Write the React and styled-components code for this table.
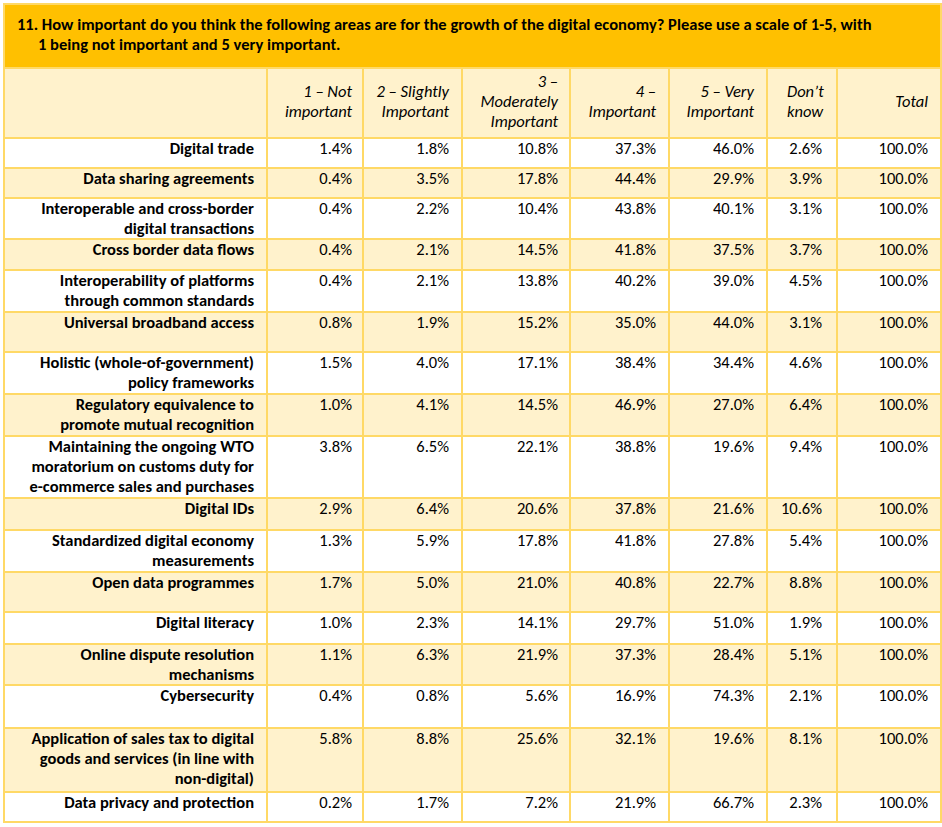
import React from "react";
import styled, { createGlobalStyle } from "styled-components";

const GlobalStyle = createGlobalStyle`
  html, body { margin: 0; padding: 0; background: #ffffff; }
  body { font-family: "Carlito", "Calibri", "Lato", sans-serif; color: #000; }
`;

const COLS = [
  { w: 94, pad: 10 },
  { w: 97, pad: 12 },
  { w: 106, pad: 11 },
  { w: 97, pad: 12 },
  { w: 96, pad: 12 },
  { w: 68, pad: 14 },
  { w: 102, pad: 12 },
];
const TEMPLATE = `261px ${COLS.map((c) => c.w + "px").join(" ")}`;

const LINE = "#FFD966";
const LIGHT = "#FFF2CC";
const BAND = "#FFC000";

const Table = styled.div`
  display: flex;
  flex-direction: column;
  gap: 2px;
  width: max-content;
  margin: 3px 0 0 3px;
  border: 2px solid ${LINE};
  background: ${LINE};
  font-size: 16.5px;
  line-height: 20px;
`;

const Band = styled.div`
  height: 62px;
  box-sizing: border-box;
  background: ${BAND};
  padding: 9px 0 0 12px;
  font-weight: 700;
  white-space: nowrap;
`;

const TitleLine = styled.div`
  padding-left: ${(p) => (p.$indent ? "21px" : "0")};
`;

const Row = styled.div`
  display: grid;
  grid-template-columns: ${TEMPLATE};
  gap: 2px;
  height: ${(p) => p.$h}px;
`;

const Cell = styled.div`
  background: ${(p) => (p.$shade ? LIGHT : "#ffffff")};
  box-sizing: border-box;
  text-align: right;
  white-space: nowrap;
  overflow: hidden;
`;

const HeadCell = styled(Cell)`
  display: flex;
  flex-direction: column;
  justify-content: center;
  align-items: ${(p) => (p.$left ? "flex-start" : "flex-end")};
  font-style: italic;
  padding: 0 ${(p) => p.$pad}px 4px ${(p) => (p.$left ? 19 : 0)}px;
  text-align: ${(p) => (p.$left ? "left" : "right")};
`;

const LabelCell = styled(Cell)`
  font-weight: 700;
  padding: 0 12px 0 0;
`;

const NumCell = styled(Cell)`
  padding: 0 ${(p) => p.$pad}px 0 0;
`;

const TextBlock = styled.div`
  margin-top: ${(p) => (p.$lift ? "-1px" : "0")};
`;

const HEADERS = [
  ["1 \u2013 Not", "important"],
  ["2 \u2013 Slightly", "Important"],
  ["3 \u2013", "Moderately", "Important"],
  ["4 \u2013", "Important"],
  ["5 \u2013 Very", "Important"],
  ["Don\u2019t", "know"],
  ["Total"],
];

const ROWS = [
  { label: ["Digital trade"], h: 28, v: ["1.4%", "1.8%", "10.8%", "37.3%", "46.0%", "2.6%"] },
  { label: ["Data sharing agreements"], h: 28, v: ["0.4%", "3.5%", "17.8%", "44.4%", "29.9%", "3.9%"] },
  { label: ["Interoperable and cross-border", "digital transactions"], h: 39, v: ["0.4%", "2.2%", "10.4%", "43.8%", "40.1%", "3.1%"] },
  { label: ["Cross border data flows"], h: 29, v: ["0.4%", "2.1%", "14.5%", "41.8%", "37.5%", "3.7%"] },
  { label: ["Interoperability of platforms", "through common standards"], h: 40, v: ["0.4%", "2.1%", "13.8%", "40.2%", "39.0%", "4.5%"] },
  { label: ["Universal broadband access"], h: 38, v: ["0.8%", "1.9%", "15.2%", "35.0%", "44.0%", "3.1%"] },
  { label: ["Holistic (whole-of-government)", "policy frameworks"], h: 40, v: ["1.5%", "4.0%", "17.1%", "38.4%", "34.4%", "4.6%"] },
  { label: ["Regulatory equivalence to", "promote mutual recognition"], h: 40, v: ["1.0%", "4.1%", "14.5%", "46.9%", "27.0%", "6.4%"] },
  { label: ["Maintaining the ongoing WTO", "moratorium on customs duty for", "e-commerce sales and purchases"], h: 60, v: ["3.8%", "6.5%", "22.1%", "38.8%", "19.6%", "9.4%"] },
  { label: ["Digital IDs"], h: 30, v: ["2.9%", "6.4%", "20.6%", "37.8%", "21.6%", "10.6%"] },
  { label: ["Standardized digital economy", "measurements"], h: 40, v: ["1.3%", "5.9%", "17.8%", "41.8%", "27.8%", "5.4%"] },
  { label: ["Open data programmes"], h: 38, v: ["1.7%", "5.0%", "21.0%", "40.8%", "22.7%", "8.8%"] },
  { label: ["Digital literacy"], h: 30, v: ["1.0%", "2.3%", "14.1%", "29.7%", "51.0%", "1.9%"] },
  { label: ["Online dispute resolution", "mechanisms"], h: 39, v: ["1.1%", "6.3%", "21.9%", "37.3%", "28.4%", "5.1%"] },
  { label: ["Cybersecurity"], h: 41, v: ["0.4%", "0.8%", "5.6%", "16.9%", "74.3%", "2.1%"] },
  { label: ["Application of sales tax to digital", "goods and services (in line with", "non-digital)"], h: 62, v: ["5.8%", "8.8%", "25.6%", "32.1%", "19.6%", "8.1%"] },
  { label: ["Data privacy and protection"], h: 28, v: ["0.2%", "1.7%", "7.2%", "21.9%", "66.7%", "2.3%"] },
];

const Lines = ({ lines }) =>
  lines.map((t, i) => <div key={i}>{t}</div>);

export default function App() {
  return (
    <>
      <GlobalStyle />
      <Table>
        <Band>
          <TitleLine>
            11. How important do you think the following areas are for the growth of the digital economy? Please use a scale of 1-5, with
          </TitleLine>
          <TitleLine $indent>1 being not important and 5 very important.</TitleLine>
        </Band>
        <Row $h={68}>
          <Cell $shade />
          {HEADERS.map((h, i) => (
            <HeadCell key={i} $shade $pad={COLS[i].pad} $left={i === 5}>
              <Lines lines={h} />
            </HeadCell>
          ))}
        </Row>
        {ROWS.map((r, ri) => {
          const shade = ri % 2 === 1;
          return (
            <Row key={ri} $h={r.h}>
              <LabelCell $shade={shade}>
                <TextBlock $lift>
                  <Lines lines={r.label} />
                </TextBlock>
              </LabelCell>
              {[...r.v, "100.0%"].map((val, ci) => (
                <NumCell key={ci} $shade={shade} $pad={COLS[ci].pad}>
                  <TextBlock $lift>{val}</TextBlock>
                </NumCell>
              ))}
            </Row>
          );
        })}
      </Table>
    </>
  );
}
